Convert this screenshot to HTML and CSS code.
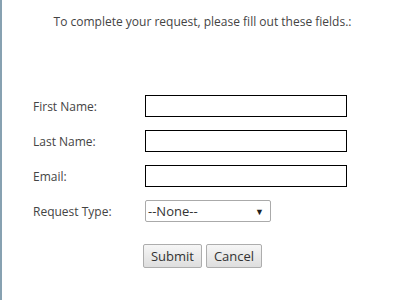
FILE: index.html
```html
<!DOCTYPE html>
<html lang="en">
<head>
    <meta charset="UTF-8">
    <title>Request Form</title>
    <link rel="stylesheet" href="styles.css">
</head>
<body>
    <div class="page">
        <p class="intro">To complete your request, please fill out these fields.:</p>

        <form class="request-form">
            <div class="form-row">
                <label for="first_name">First Name:</label>
                <input type="text" id="first_name" class="text-field">
            </div>
            <div class="form-row">
                <label for="last_name">Last Name:</label>
                <input type="text" id="last_name" class="text-field">
            </div>
            <div class="form-row">
                <label for="email">Email:</label>
                <input type="text" id="email" class="text-field">
            </div>
            <div class="form-row">
                <label for="request_type">Request Type:</label>
                <div class="select-box">
                    <span>--None--</span>
                    <span class="arrow">&#9660;</span>
                </div>
            </div>

            <div class="button-container">
                <button type="button">Submit</button>
                <button type="button">Cancel</button>
            </div>
        </form>
    </div>
</body>
</html>
```

FILE: styles.css
```css
body {
    margin: 0;
    padding: 0;
    background-color: #ffffff;
    font-family: "Open Sans", Arial, sans-serif;
    font-size: 12px;
    color: #444;
}
.page {
    border-left: 2px solid #87a1b1;
    height: 300px;
    box-sizing: border-box;
}
.intro {
    margin: 0;
    padding-top: 14px;
    text-align: center;
    line-height: 16px;
}
.request-form {
    padding: 65px 0 0 31px;
}
.form-row {
    display: flex;
    align-items: center;
    height: 22px;
    margin-bottom: 13px;
}
.form-row label {
    width: 112px;
}
.text-field {
    width: 202px;
    height: 22px;
    box-sizing: border-box;
    margin: 0;
    padding: 0 4px;
    border: 1.5px solid #000;
}
.select-box {
    width: 126px;
    height: 22px;
    box-sizing: border-box;
    border: 1px solid #aaa;
    border-radius: 2px;
    display: flex;
    align-items: center;
    justify-content: space-between;
    padding: 0 6px 0 2px;
    color: #333;
    font-size: 13px;
}
.select-box .arrow {
    font-size: 9px;
    color: #222;
}
.button-container {
    display: flex;
    justify-content: center;
    gap: 4px;
    margin-left: -31px;
    padding-top: 9px;
}
button {
    height: 24px;
    padding: 0 7px;
    font-family: "Open Sans", Arial, sans-serif;
    font-size: 13px;
    color: #333;
    border: 1px solid #adadad;
    border-radius: 2px;
    background: linear-gradient(#f6f6f6, #dedede);
}
```
